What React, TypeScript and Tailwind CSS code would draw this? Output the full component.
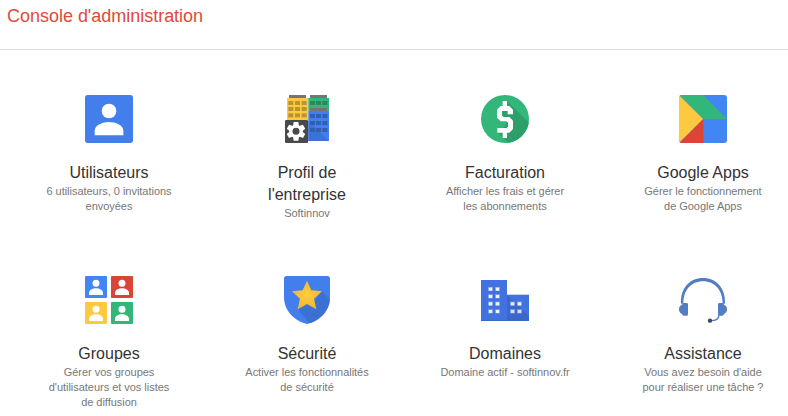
import type { ReactNode } from "react";

function Icon({ children }: { children: ReactNode }) {
  return (
    <svg viewBox="0 0 180 180" className="block h-[60px] w-[60px] shrink-0" aria-hidden="true">
      {children}
    </svg>
  );
}

function UsersIcon() {
  return (
    <Icon>
      <rect x="18" y="18" width="144" height="144" rx="8" fill="#427fed" />
      <circle cx="90" cy="66" r="22" fill="#fff" />
      <path d="M47 139v-14c0-17 24-26 43-26s43 9 43 26v14z" fill="#fff" />
    </Icon>
  );
}

function windows(xs: number[], ys: number[], fill: string) {
  return ys.flatMap((y) =>
    xs.map((x) => <rect key={`${x}-${y}`} x={x} y={y} width="15" height="12" fill={fill} />),
  );
}

function CompanyIcon() {
  return (
    <Icon>
      <path d="M36 18h51v9H36zM99 18h51v9H99z" fill="#757575" />
      <rect x="30" y="27" width="64" height="68" fill="#fcc93f" />
      <rect x="94" y="27" width="62" height="39" fill="#33b679" />
      <rect x="99" y="57" width="51" height="9" fill="#757575" />
      <rect x="94" y="66" width="62" height="90" fill="#427fed" />
      <path d="M94 95l61 61H94z" fill="#3b72d6" />
      {windows([34, 54, 74], [36, 54, 73], "#b89435")}
      {windows([99, 117, 136], [36], "#278a5c")}
      {windows([99, 117, 136], [75, 96, 117], "#315fb4")}
      <rect x="24" y="93" width="69" height="69" rx="4" fill="#494949" />
      <g transform="translate(57 127)" fill="#fff">
        <path d="M-7-28H7L9-16-9-16z" />
        <path d="M-7-28H7L9-16-9-16z" transform="rotate(60)" />
        <path d="M-7-28H7L9-16-9-16z" transform="rotate(120)" />
        <path d="M-7-28H7L9-16-9-16z" transform="rotate(180)" />
        <path d="M-7-28H7L9-16-9-16z" transform="rotate(240)" />
        <path d="M-7-28H7L9-16-9-16z" transform="rotate(300)" />
        <circle r="20" />
        <circle r="10.5" fill="#494949" />
      </g>
    </Icon>
  );
}

function BillingIcon() {
  return (
    <Icon>
      <clipPath id="coin">
        <circle cx="90" cy="90" r="72" />
      </clipPath>
      <g clipPath="url(#coin)">
        <rect width="180" height="180" fill="#33b679" />
        <path d="M96 36l84 84v60h-60l-53-51 18-10 12-20-28-24 12-21z" fill="#2d9f69" />
      </g>
      <path
        d="M83 36h13v15h7l11 11v14H98V66H81v14l5 4h17l11 11v25l-11 11h-7v16H83v-16H67v-14h28l4-4v-12l-5-4H77L66 86V62l11-11h6z"
        fill="#fff"
      />
    </Icon>
  );
}

function AppsIcon() {
  return (
    <Icon>
      <clipPath id="apps">
        <rect x="18" y="18" width="144" height="144" rx="9" />
      </clipPath>
      <g clipPath="url(#apps)">
        <rect x="18" y="18" width="144" height="144" fill="#4285f4" />
        <path d="M18 18l73 72-73 72z" fill="#fcc93f" />
        <path d="M19 18h71l72 72H91z" fill="#33b679" />
        <path d="M91 90v72H19z" fill="#db4437" />
      </g>
    </Icon>
  );
}

function GroupTile({ x, y, fill }: { x: number; y: number; fill: string }) {
  return (
    <g transform={`translate(${x} ${y})`}>
      <rect width="66" height="66" rx="3" fill={fill} />
      <circle cx="33" cy="22" r="10.5" fill="#fff" />
      <path d="M12 57v-6c0-9 11-14 21-14s21 5 21 14v6z" fill="#fff" />
    </g>
  );
}

function GroupsIcon() {
  return (
    <Icon>
      <GroupTile x={18} y={18} fill="#4285f4" />
      <GroupTile x={96} y={18} fill="#db4437" />
      <GroupTile x={18} y={96} fill="#fcc93f" />
      <GroupTile x={96} y={96} fill="#33b679" />
    </Icon>
  );
}

function SecurityIcon() {
  const shield = "M29 18h122q8 0 8 8v54c0 42-29 71-69 82-40-11-69-40-69-82V26q0-8 8-8z";
  return (
    <Icon>
      <clipPath id="shield">
        <path d={shield} />
      </clipPath>
      <radialGradient id="star">
        <stop offset="0" stopColor="#ffcc40" />
        <stop offset="1" stopColor="#f4b82f" />
      </radialGradient>
      <path d={shield} fill="#427fed" />
      <path d="M133 63l47 47v70h-66l-51-62 55-30z" fill="#3b71d2" clipPath="url(#shield)" />
      <path
        d="M90 32l13 29 32 3-24 22 7 32-28-16-28 16 7-32-24-22 32-3z"
        fill="url(#star)"
      />
    </Icon>
  );
}

function DomainWindow({ x, y, fill }: { x: number; y: number; fill: string }) {
  return (
    <g>
      <rect x={x - 3} y={y} width="15" height="12" fill="#86a7ec" />
      <rect x={x} y={y + 2} width="9" height="9" fill={fill} />
    </g>
  );
}

function DomainsIcon() {
  return (
    <Icon>
      <rect x="18" y="30" width="78" height="123" fill="#4272df" />
      <rect x="96" y="75" width="66" height="78" fill="#4272df" />
      <path d="M96 75l66 64v14H96z" fill="#3c67c9" />
      <rect x="96" y="72" width="66" height="3" fill="#c6d3f2" />
      <rect x="18" y="150" width="144" height="3" fill="#3866cd" />
      {[51, 73, 95, 118].map((y) => (
        <g key={y}>
          <DomainWindow x={42} y={y} fill="#f5f5f5" />
          <DomainWindow x={63} y={y} fill="#f5f5f5" />
        </g>
      ))}
      <DomainWindow x={108} y={95} fill="#ededed" />
      <DomainWindow x={129} y={95} fill="#f5f5f5" />
      <DomainWindow x={108} y={118} fill="#dcdcdc" />
      <DomainWindow x={129} y={118} fill="#dcdcdc" />
    </Icon>
  );
}

function SupportIcon() {
  return (
    <Icon>
      <path d="M24 101C22 54 50 24 90 24s68 30 66 77h-7c0-41-24-67-59-67s-59 26-59 67z" fill="#527dc2" />
      <path
        d="M31 99h10q4 0 4 4v30q0 4-4 4H31l-5-6q-8-3-8-13t8-13zM149 99h-10q-4 0-4 4v30q0 4 4 4h10l5-6q8-3 8-13t-8-13z"
        fill="#527dc2"
      />
      <path d="M138 134c0 12-9 18-25 18" fill="none" stroke="#527dc2" strokeWidth="4" />
      <circle cx="111" cy="152" r="6.5" fill="#424a58" />
    </Icon>
  );
}

const services = [
  { icon: <UsersIcon />, title: ["Utilisateurs"], lines: ["6 utilisateurs, 0 invitations", "envoyées"] },
  { icon: <CompanyIcon />, title: ["Profil de", "l'entreprise"], lines: ["Softinnov"] },
  { icon: <BillingIcon />, title: ["Facturation"], lines: ["Afficher les frais et gérer", "les abonnements"] },
  { icon: <AppsIcon />, title: ["Google Apps"], lines: ["Gérer le fonctionnement", "de Google Apps"] },
  { icon: <GroupsIcon />, title: ["Groupes"], lines: ["Gérer vos groupes", "d'utilisateurs et vos listes", "de diffusion"] },
  { icon: <SecurityIcon />, title: ["Sécurité"], lines: ["Activer les fonctionnalités", "de sécurité"] },
  { icon: <DomainsIcon />, title: ["Domaines"], lines: ["Domaine actif - softinnov.fr"] },
  { icon: <SupportIcon />, title: ["Assistance"], lines: ["Vous avez besoin d'aide", "pour réaliser une tâche ?"] },
];

export default function App() {
  return (
    <div className="h-[416px] w-[788px] overflow-hidden bg-white font-['Liberation_Sans',Arial,sans-serif]">
      <header className="h-[50px] border-b border-[#dedede] pl-[7px] pt-1">
        <h1 className="text-[18px] leading-6 tracking-[-0.02px] text-[#dd4b39]">Console d'administration</h1>
      </header>
      <main className="ml-[10px] grid w-[792px] auto-rows-[181px] grid-cols-4 pt-[39px]">
        {services.map(({ icon, title, lines }) => (
          <section key={title[0]} className="flex flex-col items-center text-center">
            {icon}
            <h2 className="mt-[13px] text-[16px] leading-[22px] text-[#333]">
              {title.map((line) => (
                <span key={line} className="block whitespace-nowrap">{line}</span>
              ))}
            </h2>
            <p className="text-[11px] leading-[15px] tracking-[-0.03px] text-[#777]">
              {lines.map((line) => (
                <span key={line} className="block whitespace-nowrap">{line}</span>
              ))}
            </p>
          </section>
        ))}
      </main>
    </div>
  );
}
